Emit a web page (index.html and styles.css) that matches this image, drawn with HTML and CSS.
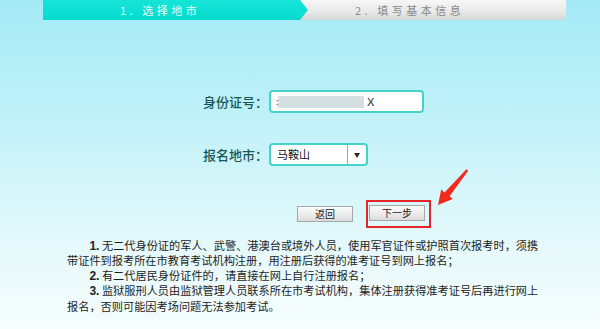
FILE: index.html
```html
<!DOCTYPE html>
<html lang="zh">
<head>
<meta charset="utf-8">
<link rel="stylesheet" href="styles.css">
</head>
<body>
<div class="page">
  <div class="steps">
    <div class="step step-active">1. 选择地市</div>
    <div class="step step-next">2. 填写基本信息</div>
  </div>

  <div class="form">
    <div class="row row-id">
      <span class="label">身份证号：</span>
      <div class="input"><span class="mask-dot">:</span><span class="mask"></span><span class="tail">X</span></div>
    </div>
    <div class="row row-city">
      <span class="label">报名地市：</span>
      <div class="select"><span class="select-val">马鞍山</span><span class="select-btn">▼</span></div>
    </div>
    <div class="actions">
      <button class="btn">返回</button>
      <span class="highlight"><button class="btn">下一步</button></span>
    </div>
  </div>

  <div class="notes">
    <p><b>1.</b> 无二代身份证的军人、武警、港澳台或境外人员，使用军官证件或护照首次报考时，须携<br>带证件到报考所在市教育考试机构注册，用注册后获得的准考证号到网上报名；</p>
    <p><b>2.</b> 有二代居民身份证件的，请直接在网上自行注册报名；</p>
    <p><b>3.</b> 监狱服刑人员由监狱管理人员联系所在市考试机构，集体注册获得准考证号后再进行网上<br>报名，否则可能因考场问题无法参加考试。</p>
  </div>

  <svg class="pointer" width="45" height="45" viewBox="0 0 45 45">
    <polygon points="8,40 22.8,34 19.6,31.2 38.2,5.8 36.4,4.2 14.6,27.6 11.2,24.6" fill="#f22a1e"/>
  </svg>
</div>
</body>
</html>
```

FILE: styles.css
```css
html, body {
  margin: 0;
  padding: 0;
}
body {
  width: 600px;
  height: 329px;
  overflow: hidden;
  background: linear-gradient(180deg, #a4eaf6 0%, #c4f2f8 40%, #e6f9fb 75%, #f6fdfd 100%);
  font-family: "Noto Sans CJK SC", "Liberation Sans", sans-serif;
}
.page {
  position: relative;
  height: 329px;
}
.steps {
  display: flex;
  margin: 0 34px 0 43px;
  height: 20px;
  background: linear-gradient(180deg, #f7f7f7 0%, #e8e8e8 60%, #d6d6d6 100%);
}
.step {
  font-size: 11px;
  line-height: 20px;
  letter-spacing: 3.5px;
  white-space: nowrap;
}
.step-active {
  width: 265px;
  flex: none;
  background: linear-gradient(180deg, #16e4d8 0%, #06dccf 100%);
  clip-path: polygon(0 0, 257px 0, 100% 50%, 257px 100%, 0 100%);
  color: #e8fffc;
  padding-left: 77px;
  box-sizing: border-box;
}
.step-next {
  color: #8a8a8a;
  padding-left: 47px;
}
.form {
  padding-left: 203px;
}
.row {
  display: flex;
  align-items: center;
  height: 23px;
}
.row-id {
  margin-top: 70px;
}
.row-city {
  margin-top: 30px;
}
.label {
  width: 66px;
  font-size: 13px;
  color: #1a5858;
  font-weight: 500;
}
.input {
  width: 155px;
  height: 23px;
  box-sizing: border-box;
  border: 2px solid #46d2c8;
  border-radius: 4px;
  background: #fff;
  display: flex;
  align-items: center;
  padding-left: 5px;
  font-size: 11px;
  color: #222;
}
.mask-dot {
  width: 2px;
  font-size: 9px;
  color: #444;
}
.mask {
  width: 86px;
  height: 12px;
  background: #d3dfe0;
}
.tail {
  margin-left: 3px;
  font-family: "Liberation Sans", sans-serif;
  font-size: 11px;
}
.select {
  width: 99px;
  height: 23px;
  box-sizing: border-box;
  border: 2px solid #46d2c8;
  border-radius: 4px;
  background: #fff;
  display: flex;
  align-items: stretch;
}
.select-val {
  flex: 1;
  font-size: 11px;
  line-height: 19px;
  padding-left: 6px;
  color: #111;
  border-right: 1px solid #46d2c8;
}
.select-btn {
  width: 18px;
  text-align: center;
  font-size: 6px;
  line-height: 19px;
  color: #222;
}
.actions {
  display: flex;
  align-items: center;
  margin-top: 34px;
  margin-left: 94px;
}
.btn {
  width: 56px;
  height: 16px;
  padding: 0;
  border: 1px solid #a8a8a8;
  background: linear-gradient(180deg, #fbfbfb 0%, #ececec 55%, #dcdcdc 100%);
  font-family: "Noto Sans CJK SC", sans-serif;
  font-size: 10px;
  line-height: 14px;
  color: #222;
}
.highlight {
  display: flex;
  margin-left: 13px;
  border: 2px solid #e4262a;
  padding: 3px 4px 5px 1px;
}
.notes {
  margin: 10px 0 0 67px;
  font-size: 11.2px;
  line-height: 14.4px;
  color: #1e1e1e;
}
.notes p {
  margin: 0;
  text-indent: 2em;
  white-space: nowrap;
}
.notes b {
  font-family: "Liberation Sans", sans-serif;
  font-size: 12px;
}
.pointer {
  position: absolute;
  left: 430px;
  top: 165px;
}
```
